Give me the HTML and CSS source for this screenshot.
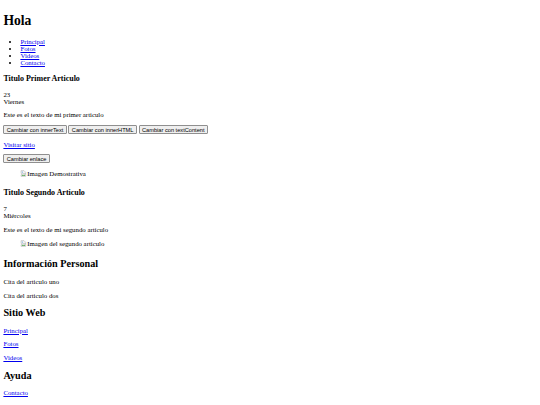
FILE: index.html
```html
<!DOCTYPE html>
<html lang="es">
<head>
<meta charset="utf-8">
<title>Hola</title>
<link rel="stylesheet" href="styles.css">
</head>
<body>
<header>
  <h1>Hola</h1>
  <nav>
    <ul>
      <li><a href="#">Principal</a></li>
      <li><a href="#">Fotos</a></li>
      <li><a href="#">Videos</a></li>
      <li><a href="#">Contacto</a></li>
    </ul>
  </nav>
</header>
<main>
  <article>
    <h3>Titulo Primer Articulo</h3>
    <div class="date">23<br>Viernes</div>
    <p>Este es el texto de mi primer articulo</p>
    <div class="actions">
      <button type="button" class="btn">Cambiar con innerText</button>
      <button type="button" class="btn">Cambiar con innerHTML</button>
      <button type="button" class="btn">Cambiar con textContent</button>
    </div>
    <p><a href="#">Visitar sitio</a></p>
    <button type="button" class="btn">Cambiar enlace</button>
    <figure><span class="broken"><svg class="broken-icon" viewBox="0 0 16 16"><path d="M2.5 1.5h7l4 4v3.5l-2 -1.5-2 2-2-1.5-2 2-3-2z" fill="#f4f4f4" stroke="#9a9a9a"/><path d="M2.5 11.5l3-2 2 1.5 2-2 2 1.5 2-1.5v6h-11z" fill="#f4f4f4" stroke="#9a9a9a"/><path d="M4 13l2-2 2 1.5 2-1.5 2 1v2H4z" fill="#6bb36b"/><circle cx="5.5" cy="5" r="1.3" fill="#5aa0e0"/></svg>Imagen Demostrativa</span></figure>
  </article>
  <article>
    <h3>Titulo Segundo Articulo</h3>
    <div class="date">7<br>Miércoles</div>
    <p>Este es el texto de mi segundo artículo</p>
    <figure><span class="broken"><svg class="broken-icon" viewBox="0 0 16 16"><path d="M2.5 1.5h7l4 4v3.5l-2 -1.5-2 2-2-1.5-2 2-3-2z" fill="#f4f4f4" stroke="#9a9a9a"/><path d="M2.5 11.5l3-2 2 1.5 2-2 2 1.5 2-1.5v6h-11z" fill="#f4f4f4" stroke="#9a9a9a"/><path d="M4 13l2-2 2 1.5 2-1.5 2 1v2H4z" fill="#6bb36b"/><circle cx="5.5" cy="5" r="1.3" fill="#5aa0e0"/></svg>Imagen del segundo articulo</span></figure>
  </article>
</main>
<aside>
  <h2>Información Personal</h2>
  <p>Cita del articulo uno</p>
  <p>Cita del articulo dos</p>
</aside>
<footer>
  <h2>Sitio Web</h2>
  <p><a href="#">Principal</a></p>
  <p><a href="#">Fotos</a></p>
  <p><a href="#">Videos</a></p>
  <h2>Ayuda</h2>
  <p><a href="#">Contacto</a></p>
</footer>
</body>
</html>
```
FILE: styles.css
```css
html {
  background: #fff;
}
body {
  margin: 3.4px;
  font-family: "Liberation Serif", "Times New Roman", serif;
  font-size: 6.8px;
  color: #000;
}
h1 {
  font-size: 13.6px;
  margin: 9.112px 0;
}
h2 {
  font-size: 10.2px;
  margin: 8.466px 0;
}
h3 {
  font-size: 7.956px;
  margin: 7.956px 0;
}
p {
  margin: 6.8px 0;
}
ul {
  margin: 6.8px 0;
  padding-left: 17px;
}
a {
  color: #0000ee;
  text-decoration: underline;
}
.btn {
  font-family: "Liberation Sans", Arial, sans-serif;
  font-size: 5.667px;
  color: #000;
  background: #efefef;
  border: 1px solid #8f8f8f;
  border-radius: 1px;
  padding: 0.4px 2.4px;
  margin: 0;
  line-height: normal;
}
figure {
  margin: 6.8px 17px;
}
.broken {
  display: inline-flex;
  align-items: flex-start;
  height: 10.2px;
  line-height: 7.82px;
}
.broken-icon {
  flex: none;
  width: 6.8px;
  height: 6.8px;
}
```
